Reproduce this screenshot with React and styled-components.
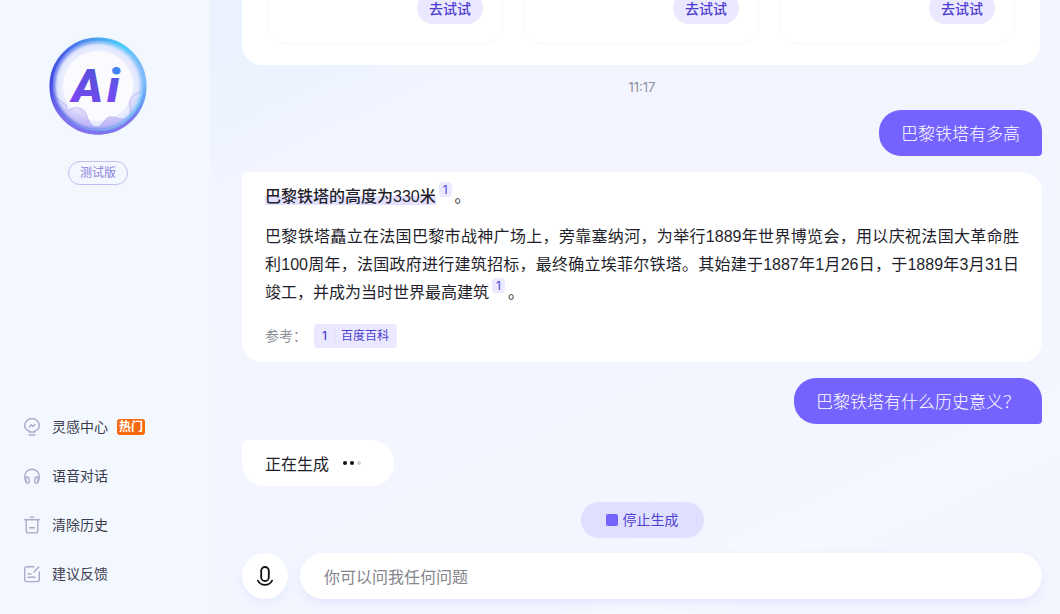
import React from 'react';
import styled, { createGlobalStyle } from 'styled-components';

const theme = {
  accent: '#7463ff',
  link: '#4f3fd0',
  tint: '#ebe9ff',
  dark: '#1f1f2b',
  muted: '#8e8f99',
  icon: '#a9abc9',
  cjk: "'Noto Sans CJK SC', sans-serif",
  digits: "Inter, 'Noto Sans CJK SC', sans-serif",
};

const GlobalStyle = createGlobalStyle`
  * {
    box-sizing: border-box;
  }
  body {
    margin: 0;
    color: ${theme.dark};
    font-family: 'Liberation Sans', 'Noto Sans CJK SC', sans-serif;
    font-size: 16px;
  }
  button,
  input {
    font: inherit;
    border: 0;
    margin: 0;
  }
  button {
    cursor: pointer;
  }
  p {
    margin: 0;
  }
`;

const Page = styled.div`
  display: flex;
  height: 100vh;
  background: #f3f8ff;
`;

const Sidebar = styled.aside`
  flex: none;
  display: flex;
  flex-direction: column;
  justify-content: space-between;
  width: 210px;
  padding: 37px 14px 28px 0;
`;

const Brand = styled.div`
  display: flex;
  flex-direction: column;
  align-items: center;
  gap: 26px;
`;

const Beta = styled.span`
  padding: 0 11px;
  border: 1px solid #c4bef2;
  border-radius: 12px;
  color: #8d80dc;
  font-size: 12px;
  line-height: 22px;
`;

const Menu = styled.nav`
  display: flex;
  flex-direction: column;
  gap: 25px;
  padding-left: 24px;
`;

const MenuItem = styled.button`
  display: flex;
  align-items: center;
  padding: 0;
  background: none;
  color: #3c3c50;
  font-size: 14px;
  line-height: 24px;
  svg {
    margin-right: 12px;
  }
`;

const Hot = styled.span`
  margin-left: 9px;
  padding: 0 2px;
  border-radius: 3px;
  background: #f76a0b;
  color: #fff;
  font-size: 12px;
  font-weight: 700;
  line-height: 16px;
`;

const Main = styled.main`
  flex: 1;
  min-width: 0;
  display: flex;
  flex-direction: column;
  padding: 0 18px 15px 32px;
  background: linear-gradient(155deg, #eaf2ff 0%, #ecf3ff 12%, #f2f5ff 18%, #f3f6ff 76%, #f5f9ff 80%, #f3f6ff 86%);
`;

const Chat = styled.section`
  flex: 1;
  min-height: 0;
  display: flex;
  flex-direction: column;
  justify-content: flex-end;
  align-items: flex-start;
  gap: 16px;
  overflow: hidden;
`;

const Suggestions = styled.div`
  flex: none;
  align-self: stretch;
  display: grid;
  grid-template-columns: repeat(3, 1fr);
  gap: 20px;
  margin-right: 2px;
  padding: 24px 25px 21px;
  border-radius: 0 0 20px 20px;
  background: #fff;
`;

const Suggestion = styled.div`
  display: flex;
  justify-content: flex-end;
  padding: 19px;
  border: 1px solid #f7f7ff;
  border-radius: 20px;
`;

const TryButton = styled.button`
  padding: 0 12px;
  border-radius: 16px;
  background: ${theme.tint};
  color: ${theme.link};
  font-family: ${theme.cjk};
  font-size: 14px;
  font-weight: 500;
  line-height: 32px;
`;

const Time = styled.time`
  align-self: center;
  color: ${theme.muted};
  font-family: ${theme.digits};
  font-size: 13px;
  line-height: 13px;
`;

const Question = styled.p`
  align-self: flex-end;
  padding: 0 22px;
  border-radius: 22px 22px 4px 22px;
  background: ${theme.accent};
  color: #fff;
  font-family: ${theme.cjk};
  font-size: 17px;
  font-weight: 300;
  line-height: 46px;
`;

const Answer = styled.article`
  align-self: stretch;
  padding: 11px 23px 14px;
  border-radius: 6px 20px 20px 20px;
  background: #fff;
  line-height: 28px;
  text-align: justify;
`;

const Summary = styled.p`
  margin-bottom: 12px;
`;

const Highlight = styled.span`
  background: linear-gradient(transparent 50%, #e3e1ff 50%);
  font-weight: 500;
`;

// the negative margin keeps the raised badge from stretching its line
const Cite = styled.a`
  display: inline-block;
  margin: -6px 3px 0;
  padding: 0 4px;
  border-radius: 4px;
  background: ${theme.tint};
  color: ${theme.link};
  font-family: ${theme.digits};
  font-size: 12px;
  line-height: 15px;
  text-decoration: none;
  vertical-align: 8px;
`;

const References = styled.div`
  display: flex;
  align-items: center;
  margin-top: 17px;
  color: ${theme.muted};
  font-size: 14px;
  line-height: 24px;
`;

const Source = styled.a`
  display: flex;
  align-items: center;
  margin-left: 7px;
  padding: 0 8px;
  border-radius: 4px;
  background: ${theme.tint};
  color: ${theme.link};
  font-size: 12px;
  text-decoration: none;
  b {
    margin-right: 6px;
    padding-right: 7px;
    border-right: 1px solid #dcd9fb;
    font-family: ${theme.digits};
    font-weight: 500;
    line-height: 12px;
  }
`;

const Generating = styled.div`
  display: flex;
  align-items: center;
  padding: 0 33px 0 23px;
  border-radius: 6px 22px 22px 22px;
  background: #fff;
  font-family: ${theme.cjk};
  line-height: 46px;
`;

const Dots = styled.span`
  display: flex;
  gap: 3px;
  margin-left: 14px;
`;

const Dot = styled.i`
  width: 4px;
  height: 4px;
  border-radius: 50%;
  background: ${props => (props.$faded ? '#d2d2d6' : '#111')};
`;

const StopButton = styled.button`
  align-self: center;
  display: flex;
  align-items: center;
  gap: 5px;
  margin: 16px 0 15px;
  padding: 0 25px;
  border-radius: 18px;
  background: #dfe0ff;
  color: ${theme.link};
  font-size: 14px;
  line-height: 36px;
`;

const StopMark = styled.i`
  width: 12px;
  height: 12px;
  border-radius: 2px;
  background: ${theme.accent};
`;

const Composer = styled.form`
  display: flex;
  gap: 12px;
`;

const MicButton = styled.button`
  flex: none;
  display: grid;
  place-items: center;
  width: 46px;
  height: 46px;
  padding: 0;
  border-radius: 50%;
  background: #fff;
  box-shadow: 0 4px 10px #e6ebff;
`;

const Prompt = styled.input`
  flex: 1;
  min-width: 0;
  height: 46px;
  padding: 0 24px;
  border-radius: 23px;
  background: #fff;
  box-shadow: 0 4px 10px #e6e6ff;
  font-family: ${theme.cjk};
  outline: none;
  &::placeholder {
    color: #85858c;
    opacity: 1;
  }
`;

const Icon = ({ children }) =>
  <svg
    width="16"
    height="18"
    viewBox="0 0 16 18"
    fill="none"
    stroke={theme.icon}
    strokeWidth="1.4"
    strokeLinecap="round"
    strokeLinejoin="round"
    aria-hidden="true"
  >
    {children}
  </svg>;

const BulbIcon = () =>
  <Icon>
    <path d="M5.2 14v-1C2.5 12 .7 10.200.7 7.800a7.300 7.300 0 0 1 14.600 0c0 2.400-1.800 4.200-4.500 5.200v1z" />
    <path d="M5.3 8.800l2-2 1.500 1.600 2-1.900M5.200 17h5.600" />
  </Icon>;

const HeadphonesIcon = () =>
  <Icon>
    <path d="M2.300 15.200C1.200 13.800.7 12 .7 9.500a7.300 7.300 0 0 1 14.600 0c0 2.500-.5 4.300-1.600 5.700" />
    <rect x="2" y="10" width="3.2" height="6" rx="1.6" transform="rotate(-10 3.6 13)" />
    <rect x="10.8" y="10" width="3.2" height="6" rx="1.6" transform="rotate(10 12.4 13)" />
  </Icon>;

const TrashIcon = () =>
  <Icon>
    <path d="M.7 3.700h14.600M6.500 1.200h3M2.200 3.700v11a2.200 2.200 0 0 0 2.200 2.200h7.200a2.200 2.200 0 0 0 2.200-2.200v-11M5.600 11.700h4.800" />
  </Icon>;

const FeedbackIcon = () =>
  <Icon>
    <path d="M10 1.700H2.700a2 2 0 0 0-2 2v10.900a2 2 0 0 0 2 2h10.600a2 2 0 0 0 2-2V7M9.800 7l5-5M4 9h3M4 12.300h7" />
  </Icon>;

const MicIcon = () =>
  <svg
    width="18"
    height="22"
    viewBox="0 0 18 22"
    fill="none"
    stroke="#111"
    strokeWidth="1.8"
    strokeLinecap="round"
    aria-hidden="true"
  >
    <rect x="5.2" y="2" width="7.6" height="14" rx="3.8" />
    <path d="M1.900 15.600c1.600 2.900 4.100 4.300 7.100 4.300s5.500-1.400 7.100-4.300" />
  </svg>;

const Logo = () =>
  <svg width="98" height="98" viewBox="0 0 98 98" role="img" aria-label="Ai">
    <defs>
      <linearGradient id="ring" x1="0" y1="0.6" x2="1" y2="0.3">
        <stop offset="0" stopColor="#3a45e0" />
        <stop offset="0.25" stopColor="#4a62ea" />
        <stop offset="0.6" stopColor="#4aa0ee" />
        <stop offset="0.85" stopColor="#45cdfa" />
        <stop offset="1" stopColor="#8cb4f8" />
      </linearGradient>
      <linearGradient id="fade" x1="0" y1="0" x2="0" y2="1">
        <stop offset="0.45" stopColor="#8672ee" stopOpacity="0" />
        <stop offset="0.85" stopColor="#8672ee" />
      </linearGradient>
      <radialGradient id="glass">
        <stop offset="0.7" stopColor="#f0f1ff" />
        <stop offset="0.88" stopColor="#e0e6fe" />
        <stop offset="1" stopColor="#a9c0fb" />
      </radialGradient>
      <linearGradient id="wave" x1="0" y1="0" x2="0" y2="1">
        <stop offset="0" stopColor="#dcdafc" stopOpacity="0.3" />
        <stop offset="1" stopColor="#a597f4" />
      </linearGradient>
      <linearGradient id="letterA" x1="0" y1="1" x2="0.4" y2="0">
        <stop offset="0.1" stopColor="#7f45f6" />
        <stop offset="1" stopColor="#5352d8" />
      </linearGradient>
      <linearGradient id="letterI" gradientUnits="userSpaceOnUse" x1="0" y1="65" x2="0" y2="31">
        <stop offset="0" stopColor="#7a48f4" />
        <stop offset="0.7" stopColor="#5a55e4" />
        <stop offset="0.74" stopColor="#3f83f0" />
      </linearGradient>
      <filter id="soft">
        <feGaussianBlur stdDeviation="1.6" />
      </filter>
    </defs>
    <circle cx="49" cy="49" r="47" fill="url(#glass)" />
    <circle cx="49" cy="49" r="35" fill="#fbfbff" />
    <path
      d="M3 53c2 8 9 11 14 15 1 2 0 4 2 6 4-4 13-5 17 1 3 5 4 14 11 15 7 0 7-8 13-10 8-1 13 5 19 0 6-6-1-12 3-19 3-5 10-5 13-9A46.500 46.500 0 0 1 3 53z"
      fill="url(#wave)"
      stroke="#a79eee"
      opacity="0.7"
    />
    <circle cx="49" cy="49" r="45" fill="none" stroke="url(#ring)" strokeWidth="4" filter="url(#soft)" opacity="0.7" />
    <circle cx="49" cy="49" r="47" fill="none" stroke="url(#ring)" strokeWidth="3" />
    <circle cx="49" cy="49" r="47" fill="none" stroke="url(#fade)" strokeWidth="3" />
    <g fontFamily="Roboto, sans-serif" fontSize="47" fontStyle="italic" fontWeight="900">
      <text x="23" y="65" fill="url(#letterA)">
        A
      </text>
      <text x="58" y="65" fill="url(#letterI)">
        i
      </text>
    </g>
  </svg>;

const menu = [
  { label: '灵感中心', icon: BulbIcon, hot: true },
  { label: '语音对话', icon: HeadphonesIcon },
  { label: '清除历史', icon: TrashIcon },
  { label: '建议反馈', icon: FeedbackIcon },
];

export default () =>
  <Page lang="zh-CN">
    <GlobalStyle />
    <Sidebar>
      <Brand>
        <Logo />
        <Beta>测试版</Beta>
      </Brand>
      <Menu>
        {menu.map(({ label, icon: ItemIcon, hot }) =>
          <MenuItem key={label} type="button">
            <ItemIcon />
            {label}
            {hot && <Hot>热门</Hot>}
          </MenuItem>
        )}
      </Menu>
    </Sidebar>
    <Main>
      <Chat>
        <Suggestions>
          {[1, 2, 3].map(id =>
            <Suggestion key={id}>
              <TryButton type="button">去试试</TryButton>
            </Suggestion>
          )}
        </Suggestions>
        <Time>11:17</Time>
        <Question>巴黎铁塔有多高</Question>
        <Answer>
          <Summary>
            <Highlight>巴黎铁塔的高度为330米</Highlight>
            <Cite href="#source-1">1</Cite>
            <span>。</span>
          </Summary>
          <p>
            巴黎铁塔矗立在法国巴黎市战神广场上，旁靠塞纳河，为举行1889年世界博览会，用以庆祝法国大革命胜利100周年，法国政府进行建筑招标，最终确立埃菲尔铁塔。其始建于1887年1月26日，于1889年3月31日竣工，并成为当时世界最高建筑
            <Cite href="#source-1">1</Cite>
            <span>。</span>
          </p>
          <References>
            参考：
            <Source id="source-1" href="#baike">
              <b>1</b>
              百度百科
            </Source>
          </References>
        </Answer>
        <Question>巴黎铁塔有什么历史意义？</Question>
        <Generating role="status">
          正在生成
          <Dots>
            <Dot />
            <Dot />
            <Dot $faded />
          </Dots>
        </Generating>
      </Chat>
      <StopButton type="button">
        <StopMark />
        停止生成
      </StopButton>
      <Composer>
        <MicButton type="button" aria-label="语音输入">
          <MicIcon />
        </MicButton>
        <Prompt type="text" aria-label="输入问题" placeholder="你可以问我任何问题" />
      </Composer>
    </Main>
  </Page>;
